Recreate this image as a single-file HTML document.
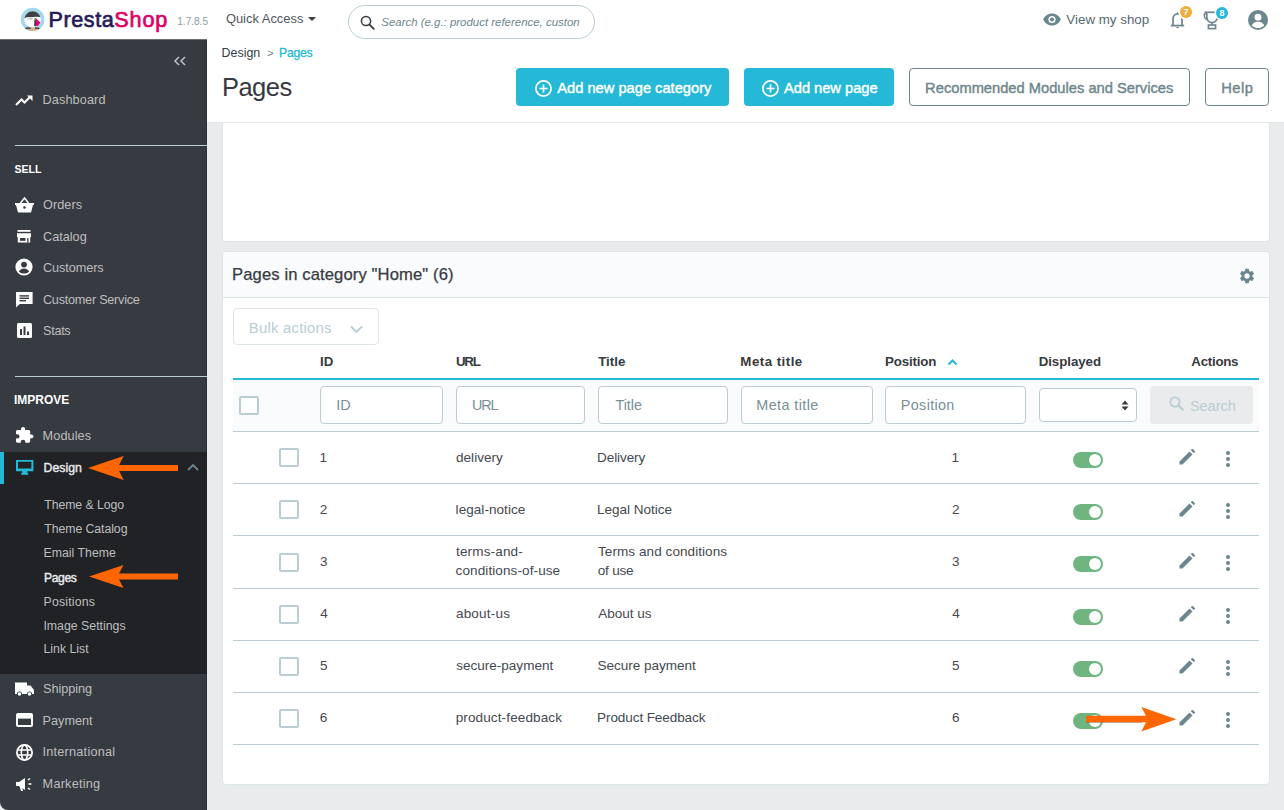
<!DOCTYPE html>
<html><head><meta charset="utf-8"><style>
html,body{margin:0;padding:0;}
body{width:1284px;height:810px;overflow:hidden;position:relative;background:#eaebec;font-family:"Liberation Sans",sans-serif;}
.t{position:absolute;white-space:nowrap;line-height:1;}
</style></head><body>
<div style="position:absolute;left:0px;top:0px;width:1284px;height:40px;background:#fff;"></div>
<div style="position:absolute;left:207px;top:40px;width:1077px;height:82px;background:#fff;"></div>
<div style="position:absolute;left:0px;top:39px;width:207px;height:771px;background:#363a41;border-bottom-left-radius:8px;box-shadow:inset 0 1px 0 #6b6e73, inset -1px 0 0 #2c2f35;"></div>
<div style="position:absolute;left:0px;top:452px;width:207px;height:222px;background:#202226;"></div>
<div style="position:absolute;left:0px;top:452px;width:4px;height:32px;background:#25b9d7;"></div>
<div style="position:absolute;left:15px;top:145px;width:192px;height:1px;background:#bbcdd2;"></div>
<div style="position:absolute;left:15px;top:376px;width:192px;height:1px;background:#bbcdd2;"></div>
<div style="position:absolute;left:222px;top:123px;width:1048px;height:119px;background:#fff;border:1px solid #dbe6e9;border-top:none;border-radius:0 0 4px 4px;box-sizing:border-box;"></div>
<div style="position:absolute;left:222px;top:251px;width:1048px;height:534px;background:#fff;border:1px solid #dbe6e9;border-radius:4px;box-sizing:border-box;"></div>
<div style="position:absolute;left:207px;top:122px;width:1077px;height:1px;background:#e6e6e6;"></div>
<div style="position:absolute;left:223px;top:252px;width:1046px;height:46px;background:#fafbfc;border-bottom:1px solid #dbe6e9;box-sizing:border-box;border-radius:4px 4px 0 0;"></div>
<svg style="position:absolute;left:18px;top:4px" width="30" height="30" viewBox="0 0 30 30">
<defs><clipPath id="lc"><circle cx="14.6" cy="15.5" r="8.3"/></clipPath></defs>
<circle cx="14.6" cy="15.5" r="11.8" fill="#a3d8ec"/>
<g clip-path="url(#lc)">
<rect x="0" y="0" width="30" height="30" fill="#ffffff"/>
<path d="M4 16 Q8 12.5 13 13.2 Q18 12 25 13.5 L25 0 L4 0 Z" fill="#3f4042"/>
<path d="M9 14 Q12 12.8 15.5 14.5 L13 16 Q11 15 9 15.5Z" fill="#c9ccd0"/>
<path d="M16.6 14.2 L18 14 L17.8 22.5 L16.2 22Z" fill="#1d1d1f"/>
<path d="M17.2 14.2 L18.6 14.4 L18.4 16.5 L17.3 16.5Z" fill="#f4a93a"/>
<path d="M18 14.5 L24 20 L19.5 23 L17.8 21.5Z" fill="#e6007e"/>
</g>
<defs><clipPath id="lo"><circle cx="14.6" cy="15.5" r="11.6"/></clipPath></defs>
<g clip-path="url(#lo)"><path d="M6 24 Q14.6 22.5 23 24 L23 30 L6 30Z" fill="#cdb596"/>
<path d="M7 24 Q10 22.6 13 23.8 L12.5 24.8 L7.5 25Z" fill="#3a3a3a"/><path d="M17 23.6 Q20 23 22 24 L21 25 L17 24.8Z" fill="#3a3a3a"/></g>
</svg>
<div style="position:absolute;left:308px;top:17px;width:0;height:0;border-left:4px solid transparent;border-right:4px solid transparent;border-top:4px solid #363a41;"></div>
<div style="position:absolute;left:348px;top:5px;width:247px;height:34px;border:1px solid #bbcdd2;border-radius:17px;box-sizing:border-box;background:#fff;"></div>
<svg style="position:absolute;left:360px;top:15px" width="15" height="15" viewBox="0 0 15 15">
<circle cx="6" cy="6" r="4.6" fill="none" stroke="#363a41" stroke-width="1.5"/>
<path d="M9.3 9.3 L13.8 13.8" stroke="#363a41" stroke-width="1.8" stroke-linecap="round"/></svg>
<svg style="position:absolute;left:1043px;top:13px" width="18" height="13" viewBox="0 0 18 13">
<path d="M9 0.5C4.9 0.5 1.6 3 0.3 6.5 1.6 10 4.9 12.5 9 12.5s7.4-2.5 8.7-6C16.4 3 13.1 0.5 9 0.5z" fill="#6c868e"/>
<circle cx="9" cy="6.5" r="3.6" fill="#fff"/><circle cx="9" cy="6.5" r="2.1" fill="#6c868e"/></svg>
<svg style="position:absolute;left:1169px;top:10px" width="17" height="20" viewBox="0 0 17 20">
<path d="M4 15 V9 C4 6 5.8 3.8 8.5 3.8 S13 6 13 9 V15" fill="none" stroke="#6c868e" stroke-width="1.7"/>
<path d="M8.5 1.8 L9.6 3.6 H7.4Z" fill="#6c868e"/>
<path d="M1.8 15.6 H15.2" stroke="#6c868e" stroke-width="1.8"/>
<path d="M7.2 17 H9.8 a1.3 1.3 0 0 1 -2.6 0z" fill="#6c868e"/></svg>
<div style="position:absolute;left:1180px;top:6px;width:11.8px;height:11.8px;border-radius:50%;background:#f0ad3c;box-shadow:0 0 0 1.6px #fff;color:#fff;font:700 9px/12px 'Liberation Sans',sans-serif;text-align:center;">7</div>
<svg style="position:absolute;left:1203px;top:10px" width="18" height="20" viewBox="0 0 18 20">
<path d="M1.5 2.3 H15" stroke="#6c868e" stroke-width="1.7"/>
<path d="M3.8 2.3 V7 C3.8 10.5 6.3 12.6 9 12.6 S14.2 10.5 14.2 7 V2.3" fill="none" stroke="#6c868e" stroke-width="1.7"/>
<path d="M3.8 4 H1.3 V5.5 C1.3 7.8 2.8 9.3 4.8 9.6" fill="none" stroke="#6c868e" stroke-width="1.4"/>
<path d="M14.2 4 H16.7 V5.5 C16.7 7.8 15.2 9.3 13.2 9.6" fill="none" stroke="#6c868e" stroke-width="1.4"/>
<rect x="8.2" y="12.5" width="1.6" height="2.6" fill="#6c868e"/>
<rect x="5.4" y="15" width="7.2" height="3.6" fill="none" stroke="#6c868e" stroke-width="1.6"/></svg>
<div style="position:absolute;left:1216.2px;top:7px;width:11.8px;height:11.8px;border-radius:50%;background:#25b9d7;box-shadow:0 0 0 1.6px #fff;color:#fff;font:700 9px/12px 'Liberation Sans',sans-serif;text-align:center;">8</div>
<svg style="position:absolute;left:1248px;top:10px" width="20" height="20" viewBox="0 0 20 20">
<circle cx="10" cy="10" r="10" fill="#6c868e"/>
<circle cx="10" cy="7.2" r="3.4" fill="#fff"/>
<path d="M3.7 15.2c1.3-2.3 3.6-3.4 6.3-3.4s5 1.1 6.3 3.4c-1.6 1.8-3.8 2.9-6.3 2.9s-4.7-1.1-6.3-2.9z" fill="#fff"/></svg>
<svg style="position:absolute;left:173px;top:56px" width="14" height="10" viewBox="0 0 14 10">
<path d="M6 1 L2 5 L6 9 M12 1 L8 5 L12 9" fill="none" stroke="#bebebe" stroke-width="1.6"/></svg>
<svg style="position:absolute;left:15px;top:95px" width="19" height="11" viewBox="0 0 19 11">
<path d="M1 10 L6.5 4.5 L9.5 7.5 L15.5 1.5" fill="none" stroke="#ffffff" stroke-width="2"/><path d="M12 0.5 H17.5 V6 Z" fill="#ffffff"/></svg>
<svg style="position:absolute;left:15px;top:197px" width="19" height="16" viewBox="0 0 19 16">
<path d="M0 6 H19 V8 H18 L16 15.5 H3 L1 8 H0 Z" fill="#ffffff"/><path d="M5.5 6 L9.5 1 L13.5 6" fill="none" stroke="#ffffff" stroke-width="1.6"/>
<circle cx="9.5" cy="10.5" r="1.3" fill="#363a41"/></svg>
<svg style="position:absolute;left:17px;top:230px" width="14" height="13" viewBox="0 0 14 13">
<rect x="0.5" y="0" width="13" height="1.8" fill="#ffffff"/><path d="M0 3.2 H14 V7.2 H13.2 V12.5 H0.8 V7.2 H0Z" fill="#ffffff"/>
<rect x="3" y="8" width="5.5" height="2.8" fill="#363a41"/><rect x="10.2" y="8" width="1.3" height="4.5" fill="#363a41"/></svg>
<svg style="position:absolute;left:15px;top:258px" width="18" height="18" viewBox="0 0 18 18">
<circle cx="9" cy="9" r="8.6" fill="#ffffff"/><circle cx="9" cy="6.6" r="2.9" fill="#363a41"/>
<path d="M3.8 13.5 C5 11.2 7 10.4 9 10.4 S13 11.2 14.2 13.5 C12.8 15 11 15.6 9 15.6 S5.2 15 3.8 13.5Z" fill="#363a41"/></svg>
<svg style="position:absolute;left:16px;top:292px" width="17" height="16" viewBox="0 0 17 16">
<path d="M0 0 H16.6 V12 H3.8 L0 15.5 Z" fill="#ffffff"/><rect x="3.5" y="3.2" width="9.5" height="1.4" fill="#363a41"/>
<rect x="3.5" y="5.6" width="9.5" height="1.4" fill="#363a41"/><rect x="3.5" y="8" width="6.5" height="1.4" fill="#363a41"/></svg>
<svg style="position:absolute;left:17px;top:323px" width="15" height="15" viewBox="0 0 15 15">
<rect x="0" y="0" width="15" height="15" rx="1.5" fill="#ffffff"/><rect x="3" y="6" width="2" height="6" fill="#363a41"/>
<rect x="6.5" y="3.5" width="2" height="8.5" fill="#363a41"/><rect x="10" y="8.5" width="2" height="3.5" fill="#363a41"/></svg>
<svg style="position:absolute;left:16px;top:427px" width="17.5" height="15.8" viewBox="2 1 21 21" preserveAspectRatio="none">
<path fill="#ffffff" d="M20.5 11H19V7c0-1.1-.9-2-2-2h-4V3.5C13 2.12 11.88 1 10.5 1S8 2.12 8 3.5V5H4c-1.1 0-1.99.9-1.99 2v3.8H3.5c1.49 0 2.7 1.21 2.7 2.7s-1.21 2.7-2.7 2.7H2V20c0 1.1.9 2 2 2h3.8v-1.5c0-1.490 1.21-2.7 2.7-2.7 1.49 0 2.7 1.21 2.7 2.7V22H17c1.1 0 2-.9 2-2v-4h1.5c1.38 0 2.5-1.12 2.5-2.5S21.88 11 20.5 11z"/></svg>
<svg style="position:absolute;left:16px;top:460px" width="18" height="15" viewBox="0 0 18 15">
<path d="M0 0 H17.4 V11.2 H0Z M2 1.8 V8.6 H15.4 V1.8Z" fill="#25b9d7" fill-rule="evenodd"/>
<rect x="6.2" y="11" width="5" height="2" fill="#25b9d7"/><rect x="5.2" y="12.8" width="7" height="2" fill="#25b9d7"/></svg>
<svg style="position:absolute;left:187px;top:463px" width="12" height="8" viewBox="0 0 12 8">
<path d="M1 7 L6 2 L11 7" fill="none" stroke="#6c868e" stroke-width="1.8"/></svg>
<svg style="position:absolute;left:15px;top:682px" width="19" height="15" viewBox="0 0 19 15">
<path d="M0 0.5 H12 V3.5 H15.5 L19 8 V12 H0Z" fill="#ffffff"/>
<circle cx="4.5" cy="12" r="2.6" fill="#363a41"/><circle cx="4.5" cy="12" r="1.8" fill="#ffffff"/>
<circle cx="14.5" cy="12" r="2.6" fill="#363a41"/><circle cx="14.5" cy="12" r="1.8" fill="#ffffff"/></svg>
<svg style="position:absolute;left:16px;top:713px" width="17" height="14" viewBox="0 0 17 14">
<rect x="1" y="1" width="15" height="12" rx="1" fill="none" stroke="#ffffff" stroke-width="2"/>
<rect x="1" y="1" width="15" height="4.6" fill="#ffffff"/></svg>
<svg style="position:absolute;left:16px;top:744px" width="17" height="17" viewBox="0 0 17 17">
<circle cx="8.5" cy="8.5" r="7.6" fill="none" stroke="#ffffff" stroke-width="1.8"/>
<ellipse cx="8.5" cy="8.5" rx="3.2" ry="7.6" fill="none" stroke="#ffffff" stroke-width="1.6"/>
<path d="M1 6 H16 M1 11 H16" stroke="#ffffff" stroke-width="1.6"/></svg>
<svg style="position:absolute;left:16px;top:777px" width="17" height="15" viewBox="0 0 17 15">
<path d="M0 5 H3 L9 1 V13 L3 9 H0Z" fill="#ffffff"/><path d="M3.5 9 L5 14 H7 L6 9.5Z" fill="#ffffff"/>
<path d="M12 3 L14 1.5 M12.5 7 H15.5 M12 11 L14 12.5" stroke="#ffffff" stroke-width="1.5"/></svg>
<svg style="position:absolute;left:88px;top:456.0px" width="90" height="24" viewBox="0 0 90 24">
<path d="M0 12.0 L35.599999999999994 0 L31.099999999999994 9.0 H90 V15.0 H31.099999999999994 L35.599999999999994 24 Z" fill="#ff6600"/></svg>
<svg style="position:absolute;left:89px;top:564.9px" width="89.4" height="23" viewBox="0 0 89.4 23">
<path d="M0 11.5 L34.5 0 L30.0 8.5 H89.4 V14.5 H30.0 L34.5 23 Z" fill="#ff6600"/></svg>
<div style="position:absolute;left:516px;top:68px;width:213px;height:38px;background:#25b9d7;border-radius:4px;"></div>
<svg style="position:absolute;left:534.5px;top:79.5px" width="17" height="17" viewBox="0 0 17 17">
<circle cx="8.5" cy="8.5" r="7.6" fill="none" stroke="#fff" stroke-width="1.7"/><path d="M8.5 4.5 V12.5 M4.5 8.5 H12.5" stroke="#fff" stroke-width="1.7"/></svg>
<div style="position:absolute;left:744px;top:68px;width:150px;height:38px;background:#25b9d7;border-radius:4px;"></div>
<svg style="position:absolute;left:761.5px;top:79.5px" width="17" height="17" viewBox="0 0 17 17">
<circle cx="8.5" cy="8.5" r="7.6" fill="none" stroke="#fff" stroke-width="1.7"/><path d="M8.5 4.5 V12.5 M4.5 8.5 H12.5" stroke="#fff" stroke-width="1.7"/></svg>
<div style="position:absolute;left:909px;top:68px;width:281px;height:38px;border:1px solid #6c868e;border-radius:4px;box-sizing:border-box;background:#fff;"></div>
<div style="position:absolute;left:1205px;top:68px;width:64px;height:38px;border:1px solid #6c868e;border-radius:4px;box-sizing:border-box;background:#fff;"></div>
<svg style="position:absolute;left:1238px;top:267px" width="18" height="18" viewBox="0 0 24 24">
<path fill="#6c868e" d="M19.14 12.94c.04-.3.06-.61.06-.94 0-.32-.02-.64-.07-.94l2.03-1.58a.49.49 0 0 0 .12-.61l-1.92-3.32a.488.488 0 0 0-.59-.22l-2.39.96c-.5-.38-1.03-.7-1.62-.94l-.36-2.54a.484.484 0 0 0-.48-.41h-3.84c-.24 0-.43.17-.47.41l-.36 2.54c-.59.24-1.13.57-1.62.94l-2.39-.96c-.22-.08-.47 0-.59.22L2.74 8.87c-.12.21-.08.47.12.61l2.03 1.58c-.05.3-.09.63-.09.94s.02.64.07.94l-2.03 1.58a.49.49 0 0 0-.12.61l1.92 3.32c.12.22.37.29.59.22l2.39-.96c.5.38 1.03.7 1.62.94l.36 2.54c.05.24.24.41.48.41h3.84c.24 0 .44-.17.47-.41l.36-2.54c.59-.24 1.13-.56 1.62-.94l2.39.96c.22.08.47 0 .59-.22l1.92-3.32c.12-.22.07-.47-.12-.61l-2.01-1.58zM12 15.6c-1.98 0-3.6-1.62-3.6-3.6s1.62-3.6 3.6-3.6 3.6 1.62 3.6 3.6-1.62 3.6-3.6 3.6z"/></svg>
<div style="position:absolute;left:233px;top:308px;width:146px;height:37px;border:1px solid #dfe6e8;border-radius:4px;box-sizing:border-box;"></div>
<svg style="position:absolute;left:350px;top:325px" width="13" height="9" viewBox="0 0 13 9">
<path d="M1 1.5 L6.5 7 L12 1.5" fill="none" stroke="#b7ced3" stroke-width="1.8"/></svg>
<svg style="position:absolute;left:947px;top:358px" width="11" height="8" viewBox="0 0 11 8">
<path d="M1.5 6.5 L5.5 2.5 L9.5 6.5" fill="none" stroke="#25b9d7" stroke-width="2"/></svg>
<div style="position:absolute;left:233px;top:378px;width:1025.5px;height:2px;background:#25b9d7;"></div>
<div style="position:absolute;left:233px;top:380px;width:1025.5px;height:51px;background:#fafbfc;border-bottom:1px solid #bbcdd2;box-sizing:border-box;height:52px;"></div>
<div style="position:absolute;left:239px;top:396px;width:20px;height:19px;border:2px solid #bbcdd2;border-radius:2px;box-sizing:border-box;background:#fff;"></div>
<div style="position:absolute;left:320px;top:386px;width:123px;height:38px;border:1px solid #bbcdd2;border-radius:4px;box-sizing:border-box;background:#fff;"></div>
<div style="position:absolute;left:456px;top:386px;width:129px;height:38px;border:1px solid #bbcdd2;border-radius:4px;box-sizing:border-box;background:#fff;"></div>
<div style="position:absolute;left:598px;top:386px;width:130px;height:38px;border:1px solid #bbcdd2;border-radius:4px;box-sizing:border-box;background:#fff;"></div>
<div style="position:absolute;left:741px;top:386px;width:132px;height:38px;border:1px solid #bbcdd2;border-radius:4px;box-sizing:border-box;background:#fff;"></div>
<div style="position:absolute;left:885px;top:386px;width:141px;height:38px;border:1px solid #bbcdd2;border-radius:4px;box-sizing:border-box;background:#fff;"></div>
<div style="position:absolute;left:1039px;top:388px;width:98px;height:34px;border:1px solid #bbcdd2;border-radius:4px;box-sizing:border-box;background:#fff;"></div>
<svg style="position:absolute;left:1121px;top:400px" width="8" height="11" viewBox="0 0 8 11">
<path d="M0.5 4.5 L4 0.5 L7.5 4.5Z M0.5 6.5 L4 10.5 L7.5 6.5Z" fill="#363a41"/></svg>
<div style="position:absolute;left:1150px;top:386px;width:103px;height:38px;background:#eaebec;border-radius:4px;"></div>
<svg style="position:absolute;left:1169px;top:396px" width="15" height="15" viewBox="0 0 15 15">
<circle cx="6" cy="6" r="4.6" fill="none" stroke="#b7ced3" stroke-width="1.8"/>
<path d="M9.3 9.3 L13.8 13.8" stroke="#b7ced3" stroke-width="2" stroke-linecap="round"/></svg>
<div style="position:absolute;left:233px;top:483px;width:1025.5px;height:1px;background:#bbcdd2;"></div>
<div style="position:absolute;left:279px;top:448px;width:20px;height:19px;border:2px solid #bbcdd2;border-radius:2px;box-sizing:border-box;"></div>
<div style="position:absolute;left:1073px;top:452px;width:30px;height:16px;background:#70b580;border-radius:8px;"></div>
<div style="position:absolute;left:1089px;top:454px;width:12px;height:12px;background:#fff;border-radius:50%;"></div>
<svg style="position:absolute;left:1179px;top:449px" width="16" height="16" viewBox="0 0 16 16">
<path d="M0.5 12.5 L10.5 2.5 L13.5 5.5 L3.5 15.5 H0.5Z" fill="#6c868e"/><path d="M11.8 1.2 L13 0 Q13.5 -0.3 14 0.2 L15.8 2 Q16.2 2.5 15.8 3 L14.8 4.2Z" fill="#6c868e"/></svg>
<div style="position:absolute;left:1225.7px;top:451px;width:4px;height:4px;background:#6c868e;border-radius:50%;"></div>
<div style="position:absolute;left:1225.7px;top:457px;width:4px;height:4px;background:#6c868e;border-radius:50%;"></div>
<div style="position:absolute;left:1225.7px;top:463px;width:4px;height:4px;background:#6c868e;border-radius:50%;"></div>
<div style="position:absolute;left:233px;top:535px;width:1025.5px;height:1px;background:#bbcdd2;"></div>
<div style="position:absolute;left:279px;top:500px;width:20px;height:19px;border:2px solid #bbcdd2;border-radius:2px;box-sizing:border-box;"></div>
<div style="position:absolute;left:1073px;top:504px;width:30px;height:16px;background:#70b580;border-radius:8px;"></div>
<div style="position:absolute;left:1089px;top:506px;width:12px;height:12px;background:#fff;border-radius:50%;"></div>
<svg style="position:absolute;left:1179px;top:501px" width="16" height="16" viewBox="0 0 16 16">
<path d="M0.5 12.5 L10.5 2.5 L13.5 5.5 L3.5 15.5 H0.5Z" fill="#6c868e"/><path d="M11.8 1.2 L13 0 Q13.5 -0.3 14 0.2 L15.8 2 Q16.2 2.5 15.8 3 L14.8 4.2Z" fill="#6c868e"/></svg>
<div style="position:absolute;left:1225.7px;top:503px;width:4px;height:4px;background:#6c868e;border-radius:50%;"></div>
<div style="position:absolute;left:1225.7px;top:509px;width:4px;height:4px;background:#6c868e;border-radius:50%;"></div>
<div style="position:absolute;left:1225.7px;top:515px;width:4px;height:4px;background:#6c868e;border-radius:50%;"></div>
<div style="position:absolute;left:233px;top:588px;width:1025.5px;height:1px;background:#bbcdd2;"></div>
<div style="position:absolute;left:279px;top:553px;width:20px;height:19px;border:2px solid #bbcdd2;border-radius:2px;box-sizing:border-box;"></div>
<div style="position:absolute;left:1073px;top:556px;width:30px;height:16px;background:#70b580;border-radius:8px;"></div>
<div style="position:absolute;left:1089px;top:558px;width:12px;height:12px;background:#fff;border-radius:50%;"></div>
<svg style="position:absolute;left:1179px;top:553px" width="16" height="16" viewBox="0 0 16 16">
<path d="M0.5 12.5 L10.5 2.5 L13.5 5.5 L3.5 15.5 H0.5Z" fill="#6c868e"/><path d="M11.8 1.2 L13 0 Q13.5 -0.3 14 0.2 L15.8 2 Q16.2 2.5 15.8 3 L14.8 4.2Z" fill="#6c868e"/></svg>
<div style="position:absolute;left:1225.7px;top:555px;width:4px;height:4px;background:#6c868e;border-radius:50%;"></div>
<div style="position:absolute;left:1225.7px;top:561px;width:4px;height:4px;background:#6c868e;border-radius:50%;"></div>
<div style="position:absolute;left:1225.7px;top:567px;width:4px;height:4px;background:#6c868e;border-radius:50%;"></div>
<div style="position:absolute;left:233px;top:640px;width:1025.5px;height:1px;background:#bbcdd2;"></div>
<div style="position:absolute;left:279px;top:605px;width:20px;height:19px;border:2px solid #bbcdd2;border-radius:2px;box-sizing:border-box;"></div>
<div style="position:absolute;left:1073px;top:609px;width:30px;height:16px;background:#70b580;border-radius:8px;"></div>
<div style="position:absolute;left:1089px;top:611px;width:12px;height:12px;background:#fff;border-radius:50%;"></div>
<svg style="position:absolute;left:1179px;top:606px" width="16" height="16" viewBox="0 0 16 16">
<path d="M0.5 12.5 L10.5 2.5 L13.5 5.5 L3.5 15.5 H0.5Z" fill="#6c868e"/><path d="M11.8 1.2 L13 0 Q13.5 -0.3 14 0.2 L15.8 2 Q16.2 2.5 15.8 3 L14.8 4.2Z" fill="#6c868e"/></svg>
<div style="position:absolute;left:1225.7px;top:608px;width:4px;height:4px;background:#6c868e;border-radius:50%;"></div>
<div style="position:absolute;left:1225.7px;top:614px;width:4px;height:4px;background:#6c868e;border-radius:50%;"></div>
<div style="position:absolute;left:1225.7px;top:620px;width:4px;height:4px;background:#6c868e;border-radius:50%;"></div>
<div style="position:absolute;left:233px;top:692px;width:1025.5px;height:1px;background:#bbcdd2;"></div>
<div style="position:absolute;left:279px;top:657px;width:20px;height:19px;border:2px solid #bbcdd2;border-radius:2px;box-sizing:border-box;"></div>
<div style="position:absolute;left:1073px;top:661px;width:30px;height:16px;background:#70b580;border-radius:8px;"></div>
<div style="position:absolute;left:1089px;top:663px;width:12px;height:12px;background:#fff;border-radius:50%;"></div>
<svg style="position:absolute;left:1179px;top:658px" width="16" height="16" viewBox="0 0 16 16">
<path d="M0.5 12.5 L10.5 2.5 L13.5 5.5 L3.5 15.5 H0.5Z" fill="#6c868e"/><path d="M11.8 1.2 L13 0 Q13.5 -0.3 14 0.2 L15.8 2 Q16.2 2.5 15.8 3 L14.8 4.2Z" fill="#6c868e"/></svg>
<div style="position:absolute;left:1225.7px;top:660px;width:4px;height:4px;background:#6c868e;border-radius:50%;"></div>
<div style="position:absolute;left:1225.7px;top:666px;width:4px;height:4px;background:#6c868e;border-radius:50%;"></div>
<div style="position:absolute;left:1225.7px;top:672px;width:4px;height:4px;background:#6c868e;border-radius:50%;"></div>
<div style="position:absolute;left:233px;top:744px;width:1025.5px;height:1px;background:#bbcdd2;"></div>
<div style="position:absolute;left:279px;top:709px;width:20px;height:19px;border:2px solid #bbcdd2;border-radius:2px;box-sizing:border-box;"></div>
<div style="position:absolute;left:1073px;top:713px;width:30px;height:16px;background:#70b580;border-radius:8px;"></div>
<div style="position:absolute;left:1089px;top:715px;width:12px;height:12px;background:#fff;border-radius:50%;"></div>
<svg style="position:absolute;left:1179px;top:710px" width="16" height="16" viewBox="0 0 16 16">
<path d="M0.5 12.5 L10.5 2.5 L13.5 5.5 L3.5 15.5 H0.5Z" fill="#6c868e"/><path d="M11.8 1.2 L13 0 Q13.5 -0.3 14 0.2 L15.8 2 Q16.2 2.5 15.8 3 L14.8 4.2Z" fill="#6c868e"/></svg>
<div style="position:absolute;left:1225.7px;top:712px;width:4px;height:4px;background:#6c868e;border-radius:50%;"></div>
<div style="position:absolute;left:1225.7px;top:718px;width:4px;height:4px;background:#6c868e;border-radius:50%;"></div>
<div style="position:absolute;left:1225.7px;top:724px;width:4px;height:4px;background:#6c868e;border-radius:50%;"></div>
<svg style="position:absolute;left:1086px;top:707px" width="92" height="25" viewBox="0 0 92 25">
<path d="M0 9.6 H56 V15.8 H0Z" fill="#3d3f44" opacity="0.5"/>
<path d="M90.4 12.2 L55.4 0 L60 8.7 H0 V15.3 H60 L55.4 24.4Z" fill="#ff6600"/></svg>
<div class="t" style="left:48.57px;top:8.92px;font-size:21.60px;font-weight:400;font-style:normal;color:#251b5b;letter-spacing:0.550px;-webkit-text-stroke:0.7px #251b5b;">Presta</div>
<div class="t" style="left:114.23px;top:8.92px;font-size:21.60px;font-weight:400;font-style:normal;color:#df0067;letter-spacing:0.900px;-webkit-text-stroke:0.7px #df0067;">Shop</div>
<div class="t" style="left:177.25px;top:17.38px;font-size:10.06px;font-weight:400;font-style:normal;color:#8c9ca3;letter-spacing:-0.000px;">1.7.8.5</div>
<div class="t" style="left:225.92px;top:13.17px;font-size:12.92px;font-weight:400;font-style:normal;color:#4f575e;letter-spacing:0.000px;">Quick Access</div>
<div class="t" style="left:381.29px;top:17.21px;font-size:11.45px;font-weight:400;font-style:italic;color:#6c868e;letter-spacing:0.000px;">Search (e.g.: product reference, custon</div>
<div class="t" style="left:1066.37px;top:13.00px;font-size:13.35px;font-weight:400;font-style:normal;color:#586a70;letter-spacing:0.000px;">View my shop</div>
<div class="t" style="left:42.58px;top:94.45px;font-size:12.70px;font-weight:400;font-style:normal;color:#bebebe;letter-spacing:0.101px;">Dashboard</div>
<div class="t" style="left:43.03px;top:198.65px;font-size:12.70px;font-weight:400;font-style:normal;color:#bebebe;letter-spacing:0.064px;">Orders</div>
<div class="t" style="left:42.97px;top:230.95px;font-size:12.70px;font-weight:400;font-style:normal;color:#bebebe;letter-spacing:0.000px;">Catalog</div>
<div class="t" style="left:42.97px;top:261.85px;font-size:12.70px;font-weight:400;font-style:normal;color:#bebebe;letter-spacing:-0.078px;">Customers</div>
<div class="t" style="left:42.97px;top:293.65px;font-size:12.70px;font-weight:400;font-style:normal;color:#bebebe;letter-spacing:-0.262px;">Customer Service</div>
<div class="t" style="left:43.03px;top:325.25px;font-size:12.70px;font-weight:400;font-style:normal;color:#bebebe;letter-spacing:-0.310px;">Stats</div>
<div class="t" style="left:42.58px;top:430.05px;font-size:12.70px;font-weight:400;font-style:normal;color:#bebebe;letter-spacing:0.092px;">Modules</div>
<div class="t" style="left:43.03px;top:682.95px;font-size:12.70px;font-weight:400;font-style:normal;color:#bebebe;letter-spacing:-0.048px;">Shipping</div>
<div class="t" style="left:42.58px;top:714.65px;font-size:12.70px;font-weight:400;font-style:normal;color:#bebebe;letter-spacing:-0.020px;">Payment</div>
<div class="t" style="left:42.46px;top:746.05px;font-size:12.70px;font-weight:400;font-style:normal;color:#bebebe;letter-spacing:0.238px;">International</div>
<div class="t" style="left:42.58px;top:778.05px;font-size:12.70px;font-weight:400;font-style:normal;color:#bebebe;letter-spacing:0.232px;">Marketing</div>
<div class="t" style="left:43.62px;top:462.29px;font-size:12.30px;font-weight:400;font-style:normal;color:#e8e8e8;letter-spacing:0.014px;-webkit-text-stroke:0.4px currentColor;">Design</div>
<div class="t" style="left:14.41px;top:164.16px;font-size:10.56px;font-weight:700;font-style:normal;color:#ffffff;letter-spacing:0.000px;">SELL</div>
<div class="t" style="left:13.92px;top:393.85px;font-size:12.00px;font-weight:700;font-style:normal;color:#ffffff;letter-spacing:0.000px;">IMPROVE</div>
<div class="t" style="left:44.25px;top:499.29px;font-size:12.30px;font-weight:400;font-style:normal;color:#bebebe;letter-spacing:-0.084px;">Theme &amp; Logo</div>
<div class="t" style="left:44.25px;top:523.49px;font-size:12.30px;font-weight:400;font-style:normal;color:#bebebe;letter-spacing:-0.071px;">Theme Catalog</div>
<div class="t" style="left:43.52px;top:547.39px;font-size:12.30px;font-weight:400;font-style:normal;color:#bebebe;letter-spacing:0.018px;">Email Theme</div>
<div class="t" style="left:43.52px;top:595.59px;font-size:12.30px;font-weight:400;font-style:normal;color:#bebebe;letter-spacing:0.176px;">Positions</div>
<div class="t" style="left:43.39px;top:619.59px;font-size:12.30px;font-weight:400;font-style:normal;color:#bebebe;letter-spacing:0.015px;">Image Settings</div>
<div class="t" style="left:43.52px;top:642.99px;font-size:12.30px;font-weight:400;font-style:normal;color:#bebebe;letter-spacing:-0.008px;">Link List</div>
<div class="t" style="left:43.93px;top:571.56px;font-size:12.10px;font-weight:400;font-style:normal;color:#ececec;letter-spacing:-0.353px;-webkit-text-stroke:0.4px currentColor;">Pages</div>
<div class="t" style="left:221.61px;top:46.98px;font-size:12.42px;font-weight:400;font-style:normal;color:#363a41;letter-spacing:0.000px;">Design</div>
<div class="t" style="left:266.96px;top:47.83px;font-size:11.42px;font-weight:400;font-style:normal;color:#6c868e;letter-spacing:0.000px;">&gt;</div>
<div class="t" style="left:279.02px;top:47.17px;font-size:12.20px;font-weight:400;font-style:normal;color:#25b9d7;letter-spacing:-0.221px;-webkit-text-stroke:0.3px currentColor;">Pages</div>
<div class="t" style="left:221.96px;top:75.31px;font-size:25.50px;font-weight:400;font-style:normal;color:#363a41;letter-spacing:-0.515px;">Pages</div>
<div class="t" style="left:557.30px;top:81.26px;font-size:14.70px;font-weight:400;font-style:normal;color:#fff;letter-spacing:-0.013px;-webkit-text-stroke:0.4px currentColor;">Add new page category</div>
<div class="t" style="left:784.00px;top:81.26px;font-size:14.70px;font-weight:400;font-style:normal;color:#fff;letter-spacing:-0.031px;-webkit-text-stroke:0.4px currentColor;">Add new page</div>
<div class="t" style="left:925.12px;top:81.26px;font-size:14.70px;font-weight:400;font-style:normal;color:#6c868e;letter-spacing:-0.000px;-webkit-text-stroke:0.4px currentColor;">Recommended Modules and Services</div>
<div class="t" style="left:1221.22px;top:81.26px;font-size:14.70px;font-weight:400;font-style:normal;color:#6c868e;letter-spacing:0.485px;-webkit-text-stroke:0.4px currentColor;">Help</div>
<div class="t" style="left:232.07px;top:267.05px;font-size:16.60px;font-weight:400;font-style:normal;color:#363a41;letter-spacing:0.114px;-webkit-text-stroke:0.25px currentColor;">Pages in category "Home" (6)</div>
<div class="t" style="left:248.81px;top:320.53px;font-size:14.85px;font-weight:400;font-style:normal;color:#b7ced3;letter-spacing:0.237px;">Bulk actions</div>
<div class="t" style="left:319.94px;top:354.94px;font-size:13.30px;font-weight:700;font-style:normal;color:#363a41;letter-spacing:0.000px;">ID</div>
<div class="t" style="left:455.90px;top:354.94px;font-size:13.30px;font-weight:700;font-style:normal;color:#363a41;letter-spacing:-1.234px;">URL</div>
<div class="t" style="left:598.17px;top:354.94px;font-size:13.30px;font-weight:700;font-style:normal;color:#363a41;letter-spacing:0.042px;">Title</div>
<div class="t" style="left:740.34px;top:354.94px;font-size:13.30px;font-weight:700;font-style:normal;color:#363a41;letter-spacing:0.475px;">Meta title</div>
<div class="t" style="left:884.94px;top:354.94px;font-size:13.30px;font-weight:700;font-style:normal;color:#363a41;letter-spacing:-0.139px;">Position</div>
<div class="t" style="left:1038.64px;top:354.94px;font-size:13.30px;font-weight:700;font-style:normal;color:#363a41;letter-spacing:-0.048px;">Displayed</div>
<div class="t" style="left:1191.37px;top:354.94px;font-size:13.30px;font-weight:700;font-style:normal;color:#363a41;letter-spacing:-0.269px;">Actions</div>
<div class="t" style="left:336.20px;top:398.41px;font-size:14.40px;font-weight:400;font-style:normal;color:#7b8f95;letter-spacing:0.000px;">ID</div>
<div class="t" style="left:472.02px;top:398.41px;font-size:14.40px;font-weight:400;font-style:normal;color:#7b8f95;letter-spacing:-1.194px;">URL</div>
<div class="t" style="left:615.41px;top:398.41px;font-size:14.40px;font-weight:400;font-style:normal;color:#7b8f95;letter-spacing:-0.010px;">Title</div>
<div class="t" style="left:756.25px;top:398.41px;font-size:14.40px;font-weight:400;font-style:normal;color:#7b8f95;letter-spacing:0.408px;">Meta title</div>
<div class="t" style="left:900.85px;top:398.41px;font-size:14.40px;font-weight:400;font-style:normal;color:#7b8f95;letter-spacing:0.332px;">Position</div>
<div class="t" style="left:1189.95px;top:399.17px;font-size:14.44px;font-weight:400;font-style:normal;color:#b7ced3;letter-spacing:0.000px;">Search</div>
<div class="t" style="left:319.48px;top:450.83px;font-size:13.55px;font-weight:400;font-style:normal;color:#454950;letter-spacing:0.000px;">1</div>
<div class="t" style="left:951.58px;top:450.83px;font-size:13.55px;font-weight:400;font-style:normal;color:#454950;letter-spacing:0.000px;">1</div>
<div class="t" style="left:455.96px;top:450.83px;font-size:13.55px;font-weight:400;font-style:normal;color:#454950;letter-spacing:0.037px;">delivery</div>
<div class="t" style="left:597.12px;top:450.83px;font-size:13.55px;font-weight:400;font-style:normal;color:#454950;letter-spacing:-0.109px;">Delivery</div>
<div class="t" style="left:319.82px;top:502.83px;font-size:13.55px;font-weight:400;font-style:normal;color:#454950;letter-spacing:0.000px;">2</div>
<div class="t" style="left:951.92px;top:502.83px;font-size:13.55px;font-weight:400;font-style:normal;color:#454950;letter-spacing:0.000px;">2</div>
<div class="t" style="left:455.62px;top:502.83px;font-size:13.55px;font-weight:400;font-style:normal;color:#454950;letter-spacing:0.035px;">legal-notice</div>
<div class="t" style="left:597.12px;top:502.83px;font-size:13.55px;font-weight:400;font-style:normal;color:#454950;letter-spacing:-0.040px;">Legal Notice</div>
<div class="t" style="left:319.99px;top:554.83px;font-size:13.55px;font-weight:400;font-style:normal;color:#454950;letter-spacing:0.000px;">3</div>
<div class="t" style="left:952.09px;top:554.83px;font-size:13.55px;font-weight:400;font-style:normal;color:#454950;letter-spacing:0.000px;">3</div>
<div class="t" style="left:456.00px;top:545.13px;font-size:13.55px;font-weight:400;font-style:normal;color:#454950;letter-spacing:0.141px;">terms-and-</div>
<div class="t" style="left:455.62px;top:563.83px;font-size:13.55px;font-weight:400;font-style:normal;color:#454950;letter-spacing:0.086px;">conditions-of-use</div>
<div class="t" style="left:598.03px;top:545.13px;font-size:13.55px;font-weight:400;font-style:normal;color:#454950;letter-spacing:0.053px;">Terms and conditions</div>
<div class="t" style="left:597.76px;top:563.83px;font-size:13.55px;font-weight:400;font-style:normal;color:#454950;letter-spacing:-0.214px;">of use</div>
<div class="t" style="left:320.20px;top:606.83px;font-size:13.55px;font-weight:400;font-style:normal;color:#454950;letter-spacing:0.000px;">4</div>
<div class="t" style="left:952.30px;top:606.83px;font-size:13.55px;font-weight:400;font-style:normal;color:#454950;letter-spacing:0.000px;">4</div>
<div class="t" style="left:455.92px;top:606.83px;font-size:13.55px;font-weight:400;font-style:normal;color:#454950;letter-spacing:0.187px;">about-us</div>
<div class="t" style="left:598.20px;top:606.83px;font-size:13.55px;font-weight:400;font-style:normal;color:#454950;letter-spacing:-0.002px;">About us</div>
<div class="t" style="left:319.96px;top:658.83px;font-size:13.55px;font-weight:400;font-style:normal;color:#454950;letter-spacing:0.000px;">5</div>
<div class="t" style="left:952.06px;top:658.83px;font-size:13.55px;font-weight:400;font-style:normal;color:#454950;letter-spacing:0.000px;">5</div>
<div class="t" style="left:456.13px;top:658.83px;font-size:13.55px;font-weight:400;font-style:normal;color:#454950;letter-spacing:-0.001px;">secure-payment</div>
<div class="t" style="left:597.59px;top:658.83px;font-size:13.55px;font-weight:400;font-style:normal;color:#454950;letter-spacing:-0.031px;">Secure payment</div>
<div class="t" style="left:319.82px;top:710.83px;font-size:13.55px;font-weight:400;font-style:normal;color:#454950;letter-spacing:0.000px;">6</div>
<div class="t" style="left:951.92px;top:710.83px;font-size:13.55px;font-weight:400;font-style:normal;color:#454950;letter-spacing:0.000px;">6</div>
<div class="t" style="left:455.65px;top:710.83px;font-size:13.55px;font-weight:400;font-style:normal;color:#454950;letter-spacing:0.114px;">product-feedback</div>
<div class="t" style="left:597.12px;top:710.83px;font-size:13.55px;font-weight:400;font-style:normal;color:#454950;letter-spacing:-0.107px;">Product Feedback</div>
</body></html>
